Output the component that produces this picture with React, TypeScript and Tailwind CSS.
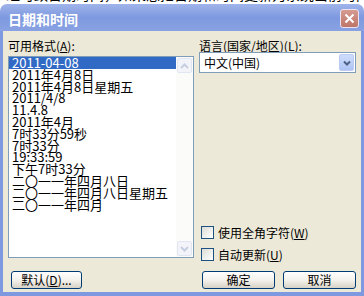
import React from "react";

const formats = [
  "2011-04-08",
  "2011年4月8日",
  "2011年4月8日星期五",
  "2011/4/8",
  "11.4.8",
  "2011年4月",
  "7时33分59秒",
  "7时33分",
  "19:33:59",
  "下午7时33分",
  "二〇一一年四月八日",
  "二〇一一年四月八日星期五",
  "二〇一一年四月",
];

const font = "font-['Noto_Sans_CJK_SC',sans-serif]";

function XpButton({ children, className = "" }: { children: React.ReactNode; className?: string }) {
  return (
    <button
      type="button"
      className={`flex h-[18px] items-center justify-center rounded-[3px] border border-[#003C74] bg-linear-to-b from-white via-[#F3F2EC] to-[#D8D2C6] text-[12px] leading-none text-black ${className}`}
    >
      {children}
    </button>
  );
}

function Checkbox({ children }: { children: React.ReactNode }) {
  return (
    <label className="flex items-center gap-[4px] text-[12px] leading-[13px] text-black">
      <span className="h-[13px] w-[13px] border border-[#1C5180] bg-linear-to-br from-[#DCDCD7] to-white" />
      <span>{children}</span>
    </label>
  );
}

function ScrollArrow({ up }: { up?: boolean }) {
  return (
    <div className="flex h-[15px] w-[15px] items-center justify-center rounded-[2px] border border-[#E0E6F2] bg-[#F2F4FA]">
      <svg width="9" height="6" viewBox="0 0 9 6">
        <path
          d={up ? "M1 5 L4.5 1.5 L8 5" : "M1 1 L4.5 4.5 L8 1"}
          fill="none"
          stroke="#C6CEDF"
          strokeWidth="2"
        />
      </svg>
    </div>
  );
}

export default function App() {
  return (
    <div className={`h-[296px] w-[364px] overflow-hidden bg-white ${font}`}>
      {/* document behind the dialog, mostly hidden */}
      <div className="h-[4px] overflow-hidden whitespace-nowrap">
        <div className="-mt-[13px] pl-[6px] text-[14px] leading-[14px] text-black">
          经可致日期时间，如果想把日期和时间更新为系统当前时间请选择自动更新
        </div>
      </div>

      <div className="flex h-[292px] flex-col overflow-hidden rounded-t-[7px]">
        {/* title bar */}
        <div className="flex h-[27px] shrink-0 items-center justify-between bg-linear-to-b from-[#A0B4EA] via-[#7E99E0] to-[#89A2E3] pl-[8px] pr-[5px] pt-[2px]">
          <span className="text-[14px] font-bold leading-none text-white">日期和时间</span>
          <div className="flex h-[19px] w-[19px] items-center justify-center rounded-[3px] border border-[#EDE3F0] bg-linear-to-b from-[#D59A91] to-[#BE7669]">
            <svg width="11" height="11" viewBox="0 0 11 11">
              <path d="M1.5 1.5 L9.5 9.5 M9.5 1.5 L1.5 9.5" stroke="white" strokeWidth="2" />
            </svg>
          </div>
        </div>

        {/* body */}
        <div className="flex flex-1 gap-[5px] border-x-[3px] border-b-[4px] border-[#7E99E0] bg-[#ECE9D8] pl-[5px] pr-[5px] pt-[9px] text-black">
          {/* left column */}
          <div className="flex w-[187px] flex-col">
            <div className="h-[16px] text-[12px] leading-[12px]">
              可用格式(<u>A</u>):
            </div>
            <div className="flex h-[202px] border border-[#7F9DB9] bg-white">
              <div className="flex-1">
                {formats.map((f, i) => (
                  <div
                    key={f}
                    className={`h-[11.8px] overflow-visible pl-[3px] text-[13px] leading-[11.8px] ${
                      i === 0 ? "bg-[#316AC5] text-white" : "text-black"
                    }`}
                  >
                    {f}
                  </div>
                ))}
              </div>
              <div className="flex w-[17px] flex-col justify-between bg-[#FBFBF9] p-[1px]">
                <ScrollArrow up />
                <ScrollArrow />
              </div>
            </div>
            <XpButton className="ml-[3px] mt-[13px] w-[71px]">
              默认(<u>D</u>)...
            </XpButton>
          </div>

          {/* right column */}
          <div className="flex flex-1 flex-col">
            <div className="h-[12px] text-[12px] leading-[12px]">
              语言(国家/地区)(<u>L</u>):
            </div>
            <div className="flex h-[21px] items-center border border-[#7F9DB9] bg-white pl-[4px] pr-[1px]">
              <span className="flex-1 text-[12px] leading-none">中文(中国)</span>
              <div className="flex h-[17px] w-[15px] items-center justify-center rounded-[2px] border border-[#BACCF5] bg-linear-to-b from-[#CFDDFC] to-[#AFC4F4]">
                <svg width="8" height="6" viewBox="0 0 8 6">
                  <path d="M1 1.5 L4 4.5 L7 1.5" fill="none" stroke="#4D6185" strokeWidth="2" />
                </svg>
              </div>
            </div>

            <div className="mt-auto flex flex-col">
              <div className="pl-[2px]">
                <Checkbox>
                  使用全角字符(<u>W</u>)
                </Checkbox>
              </div>
              <div className="mt-[9px] pl-[2px]">
                <Checkbox>
                  自动更新(<u>U</u>)
                </Checkbox>
              </div>
              <div className="mb-[3px] mt-[10px] flex gap-[8px] pl-[3px]">
                <XpButton className="w-[73px]">确定</XpButton>
                <XpButton className="w-[73px]">取消</XpButton>
              </div>
            </div>
          </div>
        </div>
      </div>
    </div>
  );
}
